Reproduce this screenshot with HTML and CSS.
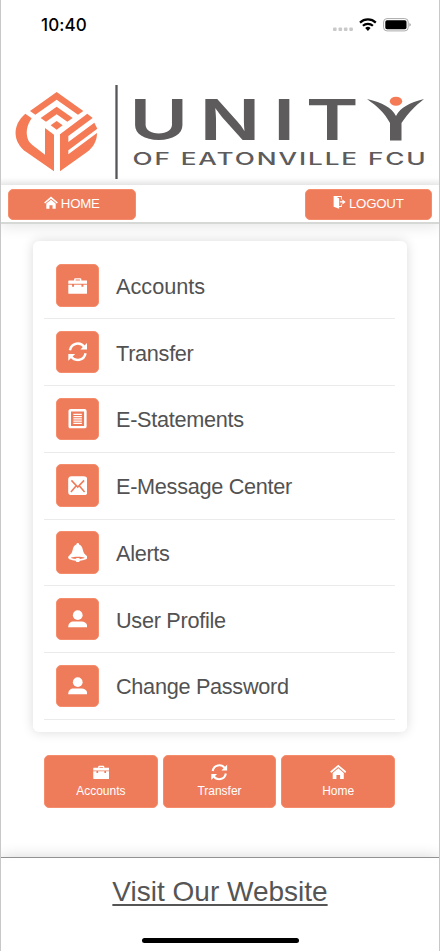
FILE: index.html
```html
<!DOCTYPE html>
<html lang="en">
<head>
<meta charset="utf-8">
<title>Unity of Eatonville FCU</title>
<link rel="stylesheet" href="styles.css">
</head>
<body>
<svg class="defs" width="0" height="0" aria-hidden="true">
  <symbol id="case" viewBox="0 0 20 20"><path fill="currentColor" d="M6.300 4.500V3.300Q6.300 2.200 7.500 2.200h5q1.200 0 1.200 1.100v1.200H19q.7 0 .7.8V8H.3V5.300Q.3 4.500 1 4.500zM7.800 4.500h4.400v-1H7.800zM.3 8.900h3.900v2.100h2V8.900h7.600v2.100h2V8.900h3.900v8.500q0 .9-.9.900H1.200q-.9 0-.9-.9z"/></symbol>
  <symbol id="sync" viewBox="0 0 20 20"><path d="M2 8.500C3.500.8 12.500-.6 16.700 5M18 11.500c-1.500 7.700-10.500 9.100-14.700 3.500" fill="none" stroke="currentColor" stroke-width="2.500"/><path fill="currentColor" d="M19.700.7v7.100h-7zM.3 19.300v-7.100h7z"/></symbol>
  <symbol id="house" viewBox="0 0 20 20"><path fill="none" stroke="currentColor" stroke-width="2.200" d="M.9 10 10 2.300l9.100 7.700"/><path fill="currentColor" d="M3.300 10.800 10 5.300l6.700 5.500v7.500h-4.500v-5.100H7.800v5.100H3.300z"/></symbol>
  <symbol id="door" viewBox="0 0 20 20"><path fill="currentColor" d="M1 0h12.500v5.500h-1.300V1.500H6L9.500 4v15.700L1 16.500z"/><path fill="currentColor" d="M12.200 12.500h1.300v4.300H9v-1.500h3.200zM10.500 8.200h4V5.500L19.500 9.200l-5 3.700v-2.800h-4z"/></symbol>
  <symbol id="doc" viewBox="0 0 20 20"><rect x="1.800" y="1.300" width="16" height="17.400" rx=".8" fill="none" stroke="currentColor" stroke-width="2.600"/><path fill="none" stroke="currentColor" stroke-width="1.200" d="M5.500 5.500h8.700M5.500 7.800h8.700M5.500 10.100h8.700M5.500 12.400h8.700M5.500 14.700h8.700"/></symbol>
  <symbol id="mail" viewBox="0 0 20 20"><rect x=".2" y=".2" width="19.600" height="19.600" rx="3.500" fill="currentColor"/><path class="cut" d="M3.500 4.500 10 11.300l6.500-6.800M3 16.500l5.200-6.300M17 16.500l-5.200-6.300"/></symbol>
  <symbol id="bell" viewBox="0 0 20 20"><path fill="currentColor" d="M10 0c1 0 1.300.7 1.400 1.500 2.300.8 3.300 2.800 3.800 5.500.5 2.800 1.700 4.500 3.500 5.800 1.700 1.200 1.500 3-.2 3.900-2 1-4.600 1.300-6.300 1.400-.4 1.200-1.200 1.700-2.200 1.700s-1.800-.5-2.200-1.700c-1.700-.1-4.300-.4-6.300-1.400-1.700-.9-1.900-2.700-.2-3.900C3.100 11.500 4.300 9.800 4.800 7c.5-2.700 1.500-4.700 3.800-5.500C8.700.7 9 0 10 0z"/><path class="cut thin" d="M2.800 15.200c3.700-1.500 10.700-1.500 14.400 0-1.300.8-3 1.100-4.800 1.300-1-1.500-3.800-1.500-4.800 0-1.800-.2-3.500-.5-4.800-1.300z"/></symbol>
  <symbol id="user" viewBox="0 0 20 20"><circle cx="10" cy="6.300" r="5" fill="currentColor"/><path fill="currentColor" d="M.2 18.700c0-3.900 2.300-5.900 5.800-5.900h8c3.500 0 5.800 2 5.800 5.900z"/></symbol>
</svg>
<div class="phone">
  <header class="top">
    <div class="status">
      <span class="time">10:40</span>
      <svg class="indicators" width="80" height="20" viewBox="0 0 80 20">
        <g fill="#c9c9c9"><rect x="2" y="12.500" width="3.600" height="3.600" rx="1"/><rect x="7.500" y="12.500" width="3.600" height="3.600" rx="1"/><rect x="12.900" y="12.500" width="3.600" height="3.600" rx="1"/><rect x="18.300" y="12.500" width="3.600" height="3.600" rx="1"/></g>
        <g fill="none" stroke="#000" stroke-width="2.200"><path d="M29 7.600a11.500 11.500 0 0 1 15.800 0"/><path d="M31.900 10.800a7.300 7.300 0 0 1 10 0"/></g>
        <path d="M34.200 13.100a4 4 0 0 1 5.400 0l-2.700 2.900z"/>
        <rect x="52.600" y="3.600" width="24.600" height="12.300" rx="3.400" fill="none" stroke="#aaa"/>
        <rect x="54.300" y="5.300" width="21.200" height="8.900" rx="1.700"/><path d="M78.300 8q1.600.5 1.600 1.800t-1.600 1.800z" fill="#aaa"/>
      </svg>
    </div>
    <svg class="logo" width="440" height="105" viewBox="0 0 440 105">
      <g transform="scale(.33333)" fill="#f47b55">
        <path d="M90 93 170 36l80 57-16 11-64-45-64 45z"/>
        <path d="m122 114 48-34 48 34-16 11-32-22-32 22z"/>
        <path d="m152 136 18-13 18 13-18 13z"/>
        <path d="m76 101 19 14c-15 22-19 44-10 66 3 6 7 10 13 15l37 28v-80l27 20v110l-82-57c-43-31-44-82-4-116z"/>
        <path d="m180 163 82-62 16 13-73 54v18l78-58 9 18-87 65v12l86-64c0 24-11 43-31 58l-80 57z"/>
      </g>
      <path d="M116.500 5v94" stroke="#55565a" stroke-width="2.300"/>
      <g fill="#5d5b5c" font-family="Inter, sans-serif">
        <text transform="translate(0 60) scale(1.420 1)" font-size="56.500" font-weight="600" x="91 140.500 192.200 215.300">UNIT</text>
        <text transform="translate(132.500 84.500) scale(1.560 1)" font-size="16.800" font-weight="500" textLength="188" lengthAdjust="spacing">OF EATONVILLE FCU</text>
      </g>
      <path d="M367 19c16 4 24 8 29 17 5-9 13-13 28-17-10 8-15 13-22.500 24v17.500H390V43C384 32 378 27 367 19z" fill="#5d5b5c"/>
      <ellipse cx="396" cy="21.300" rx="6.200" ry="4.500" fill="#f47b55"/>
    </svg>
  </header>
  <nav class="bar">
    <a class="btn"><svg width="14" height="14"><use href="#house"/></svg><span>HOME</span></a>
    <a class="btn"><svg width="13" height="13"><use href="#door"/></svg><span>LOGOUT</span></a>
  </nav>
  <main>
    <ul class="menu">
      <li><i><svg><use href="#case"/></svg></i><span>Accounts</span></li>
      <li><i><svg><use href="#sync"/></svg></i><span>Transfer</span></li>
      <li><i><svg><use href="#doc"/></svg></i><span>E-Statements</span></li>
      <li><i><svg><use href="#mail"/></svg></i><span>E-Message Center</span></li>
      <li><i><svg><use href="#bell"/></svg></i><span>Alerts</span></li>
      <li><i><svg><use href="#user"/></svg></i><span>User Profile</span></li>
      <li><i><svg><use href="#user"/></svg></i><span>Change Password</span></li>
    </ul>
    <div class="quick">
      <a><svg><use href="#case"/></svg><span>Accounts</span></a>
      <a><svg><use href="#sync"/></svg><span>Transfer</span></a>
      <a><svg><use href="#house"/></svg><span>Home</span></a>
    </div>
  </main>
  <footer><a>Visit Our Website</a><div class="grip"></div></footer>
</div>
</body>
</html>
```
FILE: styles.css
```css
* { box-sizing: border-box; }
body { margin: 0; background: #fff; font-family: "Liberation Sans", Arial, sans-serif; color: #525252; }
.defs { display: block; height: 0; }
.phone { width: 440px; height: 951px; display: flex; flex-direction: column; border-left: 1px solid #c8c8c8; border-right: 1px solid #c8c8c8; overflow: hidden; }
.top { height: 185px; padding-top: 14px; background: linear-gradient(#fff 178px, #ededed 185px); }
.status { height: 66px; display: flex; justify-content: space-between; align-items: flex-start; padding: 0 28px 0 40px; }
.time { font: 500 17px/22px Inter, sans-serif; color: #000; letter-spacing: .1px; }
.indicators { display: block; margin-top: 1px; }
.logo { display: block; margin-left: -1px; }
.bar { height: 39px; flex: none; display: flex; justify-content: space-between; align-items: flex-start; padding: 4px 7px 0; border-bottom: 2px solid #d6d8d6; box-shadow: 0 3px 14px rgba(0,0,0,.1); }
.btn { width: 127.500px; height: 31px; display: flex; align-items: center; justify-content: center; gap: 3px; border: 1px solid #f58d6c; border-radius: 5px; background: #ee7c5b; color: #fff; font-size: 13.300px; letter-spacing: -.25px; }
.btn span { margin-top: -2px; }
.btn svg { margin-top: -4px; }
main { flex: 1; padding: 17px 32px 0; }
.menu { list-style: none; margin: 0; height: 491px; padding: 11.500px 12px 0 11px; background: #fff; border-radius: 6px; box-shadow: 0 0 12px rgba(0,0,0,.15); }
.menu li { height: 66.780px; padding-left: 12px; display: flex; align-items: center; gap: 17.500px; border-bottom: 1.500px solid #ebebeb; font-size: 21.700px; letter-spacing: -.3px; }
.menu li:first-child { letter-spacing: 0; }
.menu span { padding-top: 3px; }
.menu i { width: 42.500px; height: 42.500px; display: grid; place-items: center; border: 1px solid #f58d6c; border-radius: 5px; background: #ee7c5b; color: #fff; }
.menu svg { width: 19.500px; height: 19.500px; }
.cut { fill: none; stroke: #ee7c5b; stroke-width: 1.600; }
.thin { fill: #ee7c5b; stroke: none; }
.quick { margin: 23px 12px 0 11px; display: grid; grid-template-columns: repeat(3, 1fr); gap: 5px; }
.quick a { height: 53px; display: flex; flex-direction: column; align-items: center; padding-top: 8px; border: 1px solid #f58d6c; border-radius: 5px; background: #ee7c5b; color: #fff; font-size: 12px; line-height: 14px; }
.quick svg { width: 16.500px; height: 16.500px; margin-bottom: 3px; }
footer { height: 94px; flex: none; display: flex; flex-direction: column; align-items: center; justify-content: space-between; padding: 17px 0 8px; border-top: 1px solid #929292; box-shadow: 0 0 14px rgba(0,0,0,.16); }
footer a { font-size: 28px; line-height: 34px; color: #555; text-decoration: underline; text-decoration-thickness: 1.500px; text-underline-offset: 3px; }
.grip { width: 157px; height: 5px; border-radius: 3px; background: #000; }
```
